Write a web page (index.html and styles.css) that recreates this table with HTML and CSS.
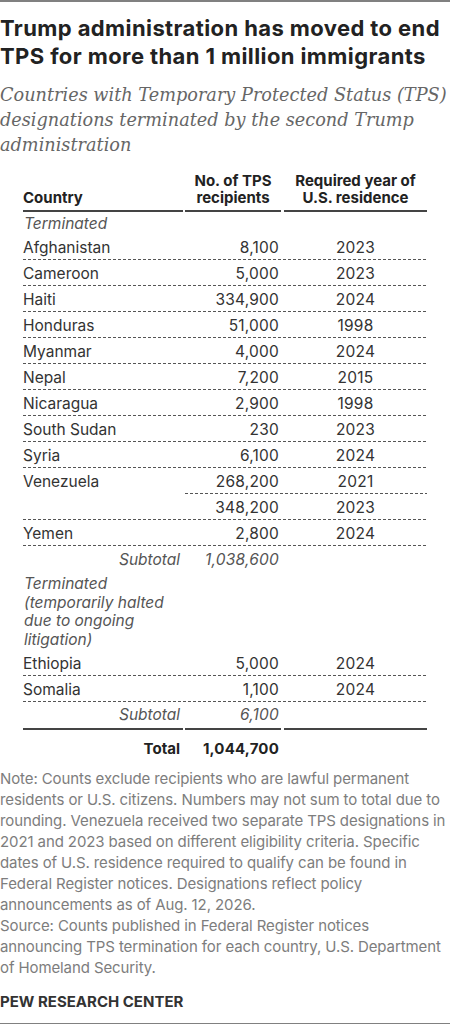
FILE: index.html
```html
<!DOCTYPE html>
<html lang="en">
<head>
  <meta charset="UTF-8">
  <meta name="viewport" content="width=device-width, initial-scale=1.0">
  <title>TPS terminations</title>
  <link rel="stylesheet" href="styles.css">
</head>
<body>
  <div class="chart">
    <h1 class="title">Trump administration has moved to end TPS for more than 1 million immigrants</h1>
    <p class="subtitle">Countries with Temporary Protected Status (TPS) designations terminated by the second Trump administration</p>

    <div class="table">
      <div class="row head">
        <div class="c1">Country</div>
        <div class="c2">No. of TPS<br>recipients</div>
        <div class="c3">Required year of<br>U.S. residence</div>
      </div>

      <div class="group first">Terminated</div>
      <div class="row dash"><div class="c1">Afghanistan</div><div class="c2 num">8,100</div><div class="c3 num">2023</div></div>
      <div class="row dash"><div class="c1">Cameroon</div><div class="c2 num">5,000</div><div class="c3 num">2023</div></div>
      <div class="row dash"><div class="c1">Haiti</div><div class="c2 num">334,900</div><div class="c3 num">2024</div></div>
      <div class="row dash"><div class="c1">Honduras</div><div class="c2 num">51,000</div><div class="c3 num">1998</div></div>
      <div class="row dash"><div class="c1">Myanmar</div><div class="c2 num">4,000</div><div class="c3 num">2024</div></div>
      <div class="row dash"><div class="c1">Nepal</div><div class="c2 num">7,200</div><div class="c3 num">2015</div></div>
      <div class="row dash"><div class="c1">Nicaragua</div><div class="c2 num">2,900</div><div class="c3 num">1998</div></div>
      <div class="row dash"><div class="c1">South Sudan</div><div class="c2 num">230</div><div class="c3 num">2023</div></div>
      <div class="row dash"><div class="c1">Syria</div><div class="c2 num">6,100</div><div class="c3 num">2024</div></div>
      <div class="row dash">
        <div class="c1">Venezuela</div>
        <div class="split">
          <div class="row dash"><div class="c2 num">268,200</div><div class="c3 num">2021</div></div>
          <div class="row"><div class="c2 num">348,200</div><div class="c3 num">2023</div></div>
        </div>
      </div>
      <div class="row dash"><div class="c1">Yemen</div><div class="c2 num">2,800</div><div class="c3 num">2024</div></div>
      <div class="row sub"><div class="c1">Subtotal</div><div class="c2 num">1,038,600</div><div class="c3"></div></div>

      <div class="group">Terminated<br>(temporarily halted<br>due to ongoing<br>litigation)</div>
      <div class="row dash"><div class="c1">Ethiopia</div><div class="c2 num">5,000</div><div class="c3 num">2024</div></div>
      <div class="row dash"><div class="c1">Somalia</div><div class="c2 num">1,100</div><div class="c3 num">2024</div></div>
      <div class="row sub last"><div class="c1">Subtotal</div><div class="c2 num">6,100</div><div class="c3"></div></div>

      <div class="row total"><div class="c1">Total</div><div class="c2 num">1,044,700</div><div class="c3"></div></div>
    </div>

    <p class="note">Note: Counts exclude recipients who are lawful permanent residents or U.S. citizens. Numbers may not sum to total due to rounding. Venezuela received two separate TPS designations in 2021 and 2023 based on different eligibility criteria. Specific dates of U.S. residence required to qualify can be found in Federal Register notices. Designations reflect policy announcements as of Aug. 12, 2026.<br>Source: Counts published in Federal Register notices announcing TPS termination for each country, U.S. Department of Homeland Security.</p>
    <p class="credit">PEW RESEARCH CENTER</p>
  </div>
</body>
</html>
```

FILE: styles.css
```css
body {
  margin: 0;
  background: #fff;
  font-family: Inter, "Liberation Sans", sans-serif;
}
.chart {
  width: 450px;
  border-top: 2px solid #808080;
  border-bottom: 2px solid #808080;
}
.title {
  margin: 12px 0 0;
  font-size: 22px;
  line-height: 28px;
  font-weight: 700;
  letter-spacing: 0.4px;
  color: #222;
}
.subtitle {
  margin: 13px 0 0;
  font-family: "DejaVu Serif", serif;
  font-style: italic;
  font-size: 17.7px;
  line-height: 25px;
  color: #666;
}

/* table */
.table {
  margin: 14px 0 0 23px;
  width: 404px;
  font-size: 15.5px;
  color: #333;
}
.row {
  display: flex;
}
.c1 {
  width: 162px;
  padding-left: 1px;
  box-sizing: border-box;
}
.c2 {
  width: 99px;
}
.c3 {
  width: 143px;
}
.split {
  width: 242px;
}
.row > div,
.group {
  padding: 4px 0 1px;
  line-height: 20px;
}
.row > .split {
  padding: 0;
}
.dash {
  padding-bottom: 1px;
  background: linear-gradient(to right, #555 3px, transparent 3px) left bottom / 5px 1px repeat-x;
}
.num {
  letter-spacing: 0.2px;
}
.c2.num {
  text-align: right;
  padding-right: 5px;
  box-sizing: border-box;
}
.c3.num {
  text-align: center;
}

.head {
  align-items: flex-end;
  font-size: 15px;
  font-weight: 700;
  color: #222;
}
.head > div {
  padding: 0 0 4px;
  line-height: 17px;
  border-bottom: 2px solid #444;
  box-sizing: border-box;
}
.head .c1 {
  width: 160px;
  margin-right: 2px;
}
.head .c2 {
  width: 96px;
  margin-right: 3px;
  text-align: center;
}
.head .c3 {
  text-align: center;
}

.group {
  font-style: italic;
  color: #555;
  padding: 4px 0 0 1px;
  line-height: 18.67px;
}
.group.first {
  padding: 2px 0 0 1px;
  line-height: 20px;
}

.sub {
  font-style: italic;
  color: #555;
}
.sub .c1,
.total .c1 {
  text-align: right;
  padding-right: 5px;
}
.sub.last > div {
  padding: 3px 0 3px;
  border-bottom: 2px solid #444;
  box-sizing: border-box;
}
.sub.last .c1 {
  width: 160px;
  margin-right: 2px;
  padding-right: 3px;
}
.sub.last .c2 {
  width: 96px;
  margin-right: 3px;
  padding-right: 2px;
}
.total {
  font-size: 15px;
  font-weight: 700;
  color: #222;
}
.total > div {
  padding: 9px 0 0;
}

.note {
  margin: 9px 0 0;
  font-size: 15px;
  line-height: 21px;
  letter-spacing: -0.1px;
  color: #7d7d7d;
}
.credit {
  margin: 13px 0 11px;
  font-size: 15px;
  line-height: 21px;
  font-weight: 700;
  color: #333;
}
```
